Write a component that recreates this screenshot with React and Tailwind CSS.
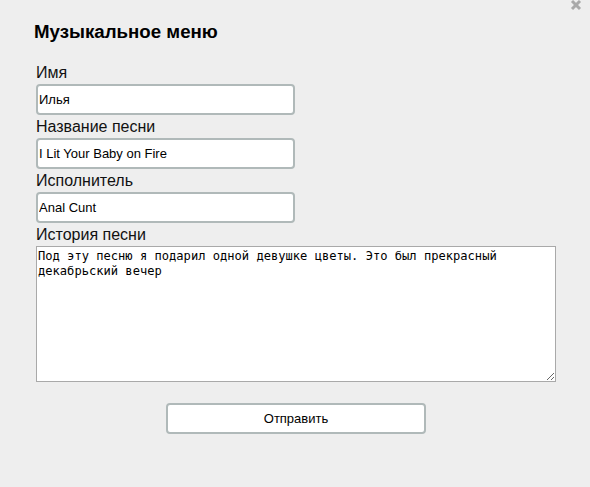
export default function App() {
  const inputCls =
    "block w-[259px] h-[31px] border-2 border-[#b0b9b9] rounded-[4px] bg-white pl-[1px] text-[13px] text-black outline-none";
  const labelCls = "block h-[23px] text-[16px] leading-[23px] text-[#111]";
  return (
    <div
      className="relative w-[590px] h-[487px] bg-[#eeeeee] overflow-hidden"
      style={{ fontFamily: '"Liberation Sans", Arial, sans-serif' }}
    >
      <svg
        className="absolute left-[570px] top-[-1px]"
        width="12"
        height="12"
        viewBox="0 0 12 12"
      >
        <path d="M2 2 L10 10 M10 2 L2 10" stroke="#a9a9a9" strokeWidth="3" />
      </svg>
      <div className="pl-[36px] pt-[19px]">
        <h2 className="-ml-[2px] text-[18.7px] font-bold leading-[26px] text-black">
          Музыкальное меню
        </h2>
        <div className="mt-[16px] w-[520px]">
          <label className={labelCls}>Имя</label>
          <input className={inputCls} defaultValue="Илья" />
          <label className={labelCls}>Название песни</label>
          <input className={inputCls} defaultValue="I Lit Your Baby on Fire" />
          <label className={labelCls}>Исполнитель</label>
          <input className={inputCls} defaultValue="Anal Cunt" />
          <label className={labelCls}>История песни</label>
          <textarea
            className="block w-[520px] h-[136px] border border-[#a9a9a9] bg-white px-[1px] py-[2px] text-[12.1px] leading-[15px] text-black outline-none"
            style={{ fontFamily: '"DejaVu Sans Mono", monospace' }}
            defaultValue="Под эту песню я подарил одной девушке цветы. Это был прекрасный декабрьский вечер"
          />
          <div className="flex justify-center mt-[21px]">
            <button className="w-[260px] h-[31px] border-2 border-[#b0b9b9] rounded-[4px] bg-white text-[13px] text-black">
              Отправить
            </button>
          </div>
        </div>
      </div>
    </div>
  );
}
